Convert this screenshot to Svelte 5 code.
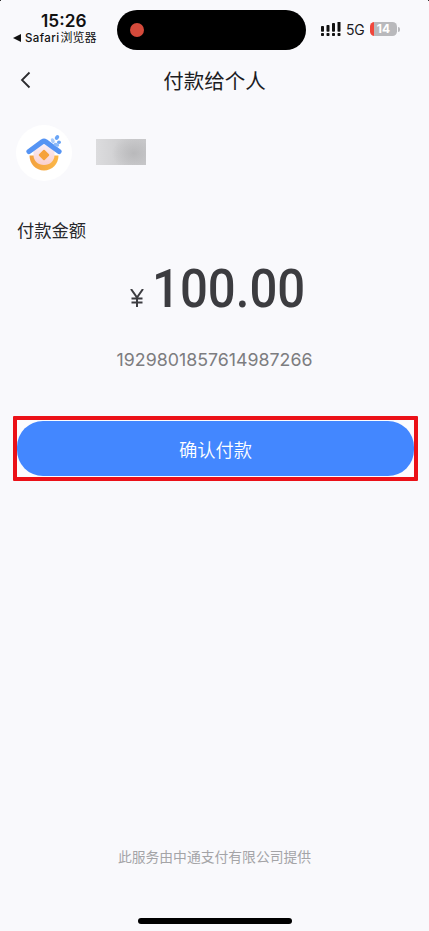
<script>
  let payment = {
    amount: '100.00',
    orderNo: '1929801857614987266'
  };

  const bars = [7, 8, 10, 12];
</script>

<div class="screen">
  <i class="corner left"></i>
  <i class="corner right"></i>

  <header class="status-bar">
    <div class="clock">
      <div class="time">15:26</div>
      <div class="back-app">
        <svg width="8" height="8" viewBox="0 0 8 8"><path d="M8 0v8L0 4z" fill="#111" /></svg>
        <span>Safari<span class="zh">浏览器</span></span>
      </div>
    </div>
    <div class="island"><span class="record"></span></div>
    <div class="signal">
      <svg width="20" height="15" viewBox="0 0 20 15" fill="#111">
        {#each bars as height, i}
          <rect x={i * 5.5} y={11 - height} width="3" height={height - 1.2} rx="0.8" />
          <rect x={i * 5.5} y="11" width="3" height="3" rx="0.8" />
        {/each}
      </svg>
      <span class="network">5G</span>
      <div class="battery"><span>14</span></div>
      <i class="battery-tip"></i>
    </div>
  </header>

  <nav class="title-bar">
    <svg class="back" width="11" height="18" viewBox="0 0 11 18">
      <path d="M9.5 1.5 2 9l7.5 7.5" fill="none" stroke="#2b2b2e" stroke-width="1.8" />
    </svg>
    <h1>付款给个人</h1>
  </nav>

  <section class="payee">
    <div class="avatar">
      <svg width="38" height="38" viewBox="0 0 38 38">
        <defs>
          <linearGradient id="bowl" x1="0" y1="0" x2="1" y2="0">
            <stop offset="0" stop-color="#f3a13e" />
            <stop offset="1" stop-color="#fbb748" />
          </linearGradient>
          <linearGradient id="inner" x1="0" y1="0" x2="0" y2="1">
            <stop offset="0" stop-color="#f8f1fa" />
            <stop offset="1" stop-color="#fbd0cc" />
          </linearGradient>
        </defs>
        <path d="M4.500 21.500h29C33.500 30 27 36.500 19 36.500S4.500 30 4.500 21.500z" fill="url(#bowl)" />
        <path d="M8.500 17 19 9l10.500 8v4c0 6-4.500 10-10.500 10S8.500 27 8.500 21z" fill="url(#inner)" />
        <path d="M4 17.500 17.500 7.600q1.500-1 3 0L34 17.500" fill="none" stroke="#5594f4" stroke-width="5.200" stroke-linecap="round" stroke-linejoin="round" />
        <rect x="15" y="17" width="8" height="8" rx="1" fill="#f6a23b" transform="rotate(45 19 21)" />
        <g fill="#6aa5f6">
          <ellipse cx="32" cy="3.500" rx="1.900" ry="2.600" transform="rotate(40 32 3.500)" />
          <ellipse cx="27.800" cy="6.700" rx="1.800" ry="2.600" transform="rotate(-25 27.800 6.700)" fill="#a9cbfa" />
          <ellipse cx="34" cy="8.200" rx="2" ry="1.700" />
          <ellipse cx="31.500" cy="10.800" rx="2.800" ry="1.800" transform="rotate(20 31.500 10.800)" fill="#8dbbf9" />
        </g>
      </svg>
    </div>
    <div class="masked-name"></div>
  </section>

  <h2>付款金额</h2>
  <div class="amount">
    <svg class="yen" width="14" height="18" viewBox="0 0 14 18">
      <path d="M1 0l6 8.500L13 0M7 8.500V18M1.500 9.500h11M1.500 13.500h11" fill="none" stroke="#3c3c40" stroke-width="2" />
    </svg>
    <span class="value">{payment.amount}</span>
  </div>
  <p class="order-no">{payment.orderNo}</p>

  <div class="highlight">
    <button>确认付款</button>
  </div>

  <footer>
    <p>此服务由中通支付有限公司提供</p>
    <div class="home-indicator"></div>
  </footer>
</div>

<style>
  :global(body) {
    background: #f9f9fc;
  }

  .screen {
    position: relative;
    display: flex;
    flex-direction: column;
    width: 429px;
    height: 931px;
    overflow: hidden;
    background: #f9f9fc;
    color: #1c1c1f;
    font-family: Inter, "Noto Sans CJK SC", sans-serif;
  }

  .corner {
    position: absolute;
    top: 0;
    width: 3px;
    height: 3px;
  }

  .corner.left {
    left: 0;
    background: radial-gradient(circle at 100% 100%, transparent 3px, #333 3.5px);
  }

  .corner.right {
    right: 0;
    background: radial-gradient(circle at 0 100%, transparent 3px, #333 3.5px);
  }

  .status-bar {
    display: flex;
    height: 50px;
  }

  .clock {
    width: 104px;
    padding: 11px 0 0 13px;
    box-sizing: border-box;
    color: #111;
  }

  .time {
    padding-left: 28px;
    font-size: 17.3px;
    line-height: 20px;
    font-weight: 600;
  }

  .back-app {
    display: flex;
    align-items: center;
    gap: 4px;
    height: 14px;
    font-size: 11.5px;
    line-height: 14px;
    font-weight: 500;
    letter-spacing: 0.4px;
    white-space: nowrap;
  }

  .zh {
    margin-left: 1px;
    font-size: 12px;
    font-weight: 400;
    letter-spacing: 0;
  }

  .island {
    display: flex;
    align-items: center;
    width: 189px;
    height: 40px;
    margin: 10px 0 0 13px;
    padding-left: 13px;
    box-sizing: border-box;
    border-radius: 20px;
    background: #000;
  }

  .record {
    width: 14px;
    height: 14px;
    border-radius: 50%;
    background: #d44a3b;
  }

  .signal {
    display: flex;
    align-items: center;
    height: 16px;
    margin: 21px 0 0 15px;
  }

  .network {
    width: 20px;
    margin-left: 5px;
    font-size: 14px;
    letter-spacing: -0.2px;
  }

  .battery {
    width: 27px;
    height: 14px;
    margin-left: 4px;
    border-radius: 4.5px;
    background: linear-gradient(90deg, #f0473c 4px, #b9b9bc 4px);
    color: #fff;
    font-size: 12px;
    line-height: 14px;
    font-weight: 700;
    text-align: center;
  }

  .battery-tip {
    width: 2px;
    height: 5px;
    margin-left: 1px;
    border-radius: 0 2px 2px 0;
    background: #b9b9bc;
  }

  .title-bar {
    display: flex;
    align-items: center;
    height: 60px;
  }

  .back {
    margin-left: 20px;
  }

  h1 {
    flex: 1;
    margin: 3px 31px 0 0;
    font-size: 20.5px;
    line-height: 30px;
    font-weight: 400;
    text-align: center;
  }

  .payee {
    display: flex;
    align-items: center;
    height: 56px;
    margin: 15px 0 0 16px;
  }

  .avatar {
    display: flex;
    align-items: center;
    justify-content: center;
    width: 56px;
    height: 56px;
    border-radius: 50%;
    background: #fff;
  }

  .masked-name {
    width: 50px;
    height: 26px;
    margin: 0 0 3px 24px;
    background:
      radial-gradient(ellipse 22px 18px at 76% 55%, #b9b9bb, transparent),
      linear-gradient(90deg, #dcdcde, #d0d0d2 45%, #cacacc);
  }

  h2 {
    margin: 37px 0 0 17px;
    font-size: 17.3px;
    line-height: 26px;
    font-weight: 400;
    color: #28282b;
  }

  .amount {
    display: flex;
    align-items: flex-end;
    height: 63px;
    margin: 0 0 0 130px;
  }

  .value {
    margin-left: 8px;
    font-family: Roboto, sans-serif;
    font-size: 53px;
    line-height: 36px;
    font-weight: 500;
    color: #3c3c40;
    transform: scaleX(0.927);
    transform-origin: left;
  }

  .order-no {
    margin: 41px 0 0;
    font-size: 17.8px;
    line-height: 24px;
    color: #7d7d80;
    text-align: center;
  }

  .highlight {
    height: 65px;
    margin: 44px 11px 0 13px;
    padding: 1px 0;
    box-sizing: border-box;
    border: 4px solid #eb1118;
    border-radius: 1px;
    background: #fcfcfe;
  }

  button {
    display: block;
    width: 100%;
    height: 55px;
    padding: 0;
    border: none;
    border-radius: 26px;
    background: #4387ff;
    color: #fff;
    font-family: inherit;
    font-size: 18.3px;
    font-weight: 350;
  }

  footer {
    display: flex;
    flex-direction: column;
    align-items: center;
    margin-top: auto;
  }

  footer p {
    margin: 0;
    font-size: 13.8px;
    line-height: 20px;
    color: #a4a4a7;
  }

  .home-indicator {
    width: 154px;
    height: 6px;
    margin: 51px 0 7px;
    border-radius: 3px;
    background: #000;
  }
</style>
